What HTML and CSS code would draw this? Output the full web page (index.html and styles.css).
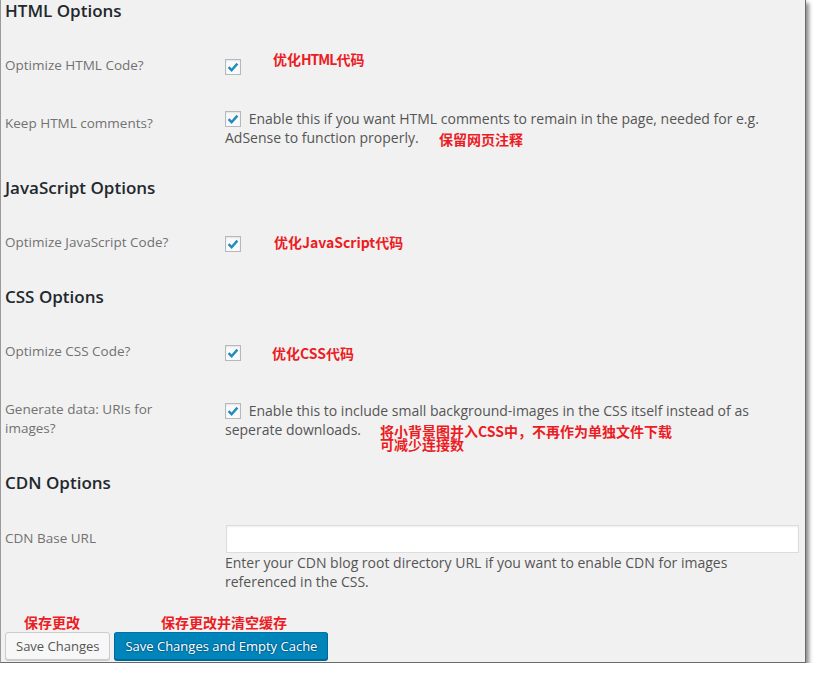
FILE: index.html
```html
<!DOCTYPE html>
<html lang="en">
<head>
    <meta charset="UTF-8">
    <meta name="viewport" content="width=device-width, initial-scale=1.0">
    <title>Autoptimize Settings</title>
    <link rel="stylesheet" href="styles.css">
</head>
<body>
    <div class="frame">
        <h3 class="section-title first">HTML Options</h3>
        <div class="form-table">
            <div class="row">
                <div class="label">Optimize HTML Code?</div>
                <div class="field">
                    <span class="check solo"><svg viewBox="0 0 16 16" width="16" height="16"><path d="M3.6 8.2 L6.6 11.2 L12.4 4.6" /></svg></span>
                </div>
            </div>
            <div class="row">
                <div class="label">Keep HTML comments?</div>
                <div class="field">
                    <span class="check"><svg viewBox="0 0 16 16" width="16" height="16"><path d="M3.6 8.2 L6.6 11.2 L12.4 4.6" /></svg></span>
                    Enable this if you want HTML comments to remain in the page, needed for e.g. AdSense to function properly.
                </div>
            </div>
        </div>

        <h3 class="section-title">JavaScript Options</h3>
        <div class="form-table">
            <div class="row">
                <div class="label">Optimize JavaScript Code?</div>
                <div class="field">
                    <span class="check solo"><svg viewBox="0 0 16 16" width="16" height="16"><path d="M3.6 8.2 L6.6 11.2 L12.4 4.6" /></svg></span>
                </div>
            </div>
        </div>

        <h3 class="section-title">CSS Options</h3>
        <div class="form-table">
            <div class="row">
                <div class="label">Optimize CSS Code?</div>
                <div class="field">
                    <span class="check solo"><svg viewBox="0 0 16 16" width="16" height="16"><path d="M3.6 8.2 L6.6 11.2 L12.4 4.6" /></svg></span>
                </div>
            </div>
            <div class="row">
                <div class="label tall">Generate data: URIs for images?</div>
                <div class="field low">
                    <span class="check"><svg viewBox="0 0 16 16" width="16" height="16"><path d="M3.6 8.2 L6.6 11.2 L12.4 4.6" /></svg></span>
                    Enable this to include small background-images in the CSS itself instead of as seperate downloads.
                </div>
            </div>
        </div>

        <h3 class="section-title">CDN Options</h3>
        <div class="form-table">
            <div class="row cdn">
                <div class="label">CDN Base URL</div>
                <div class="field">
                    <input type="text" class="text-input">
                    <div class="description">Enter your CDN blog root directory URL if you want to enable CDN for images referenced in the CSS.</div>
                </div>
            </div>
        </div>

        <div class="submit">
            <button class="button">Save Changes</button>
            <button class="button button-primary">Save Changes and Empty Cache</button>
        </div>

        <span class="note note-html">优化<span class="latin">HTML</span>代码</span>
        <span class="note note-comments">保留网页注释</span>
        <span class="note note-js">优化JavaScript代码</span>
        <span class="note note-css">优化CSS代码</span>
        <span class="note note-datauri">将小背景图并入CSS中，不再作为单独文件下载<br>可减少连接数</span>
        <span class="note note-save">保存更改</span>
        <span class="note note-empty">保存更改并清空缓存</span>
    </div>
</body>
</html>
```

FILE: styles.css
```css
body{
    margin: 0;
    background-color: #fff;
    font-family: "Open Sans", "Noto Sans", sans-serif;
}
.frame{
    position: relative;
    box-sizing: border-box;
    width: 806px;
    padding: 1px 0 2px 4px;
    background-color: #f1f1f1;
    border-left: 1px solid #9a9a9a;
    border-right: 1px solid #6b6b6b;
    border-bottom: 1px solid #6b6b6b;
    box-shadow: 3px 3px 4px rgba(0, 0, 0, 0.45);
    color: #555;
}
.section-title{
    margin: 16px 0;
    font-size: 17px;
    font-weight: 600;
    line-height: 19px;
    color: #23282d;
}
.section-title.first{
    margin-top: 0;
}
.row{
    display: grid;
    grid-template-columns: 220px 1fr;
}
.label{
    padding: 20px 30px 20px 0;
    font-size: 13.5px;
    line-height: 18px;
    color: #727272;
}
.label.tall{
    padding-bottom: 19px;
    line-height: 19px;
}
.cdn .label{
    padding-top: 21px;
}
.field{
    padding: 15px 7px 15px 0;
    font-size: 14px;
    line-height: 19px;
    color: #555;
}
.field.low{
    padding-top: 21px;
}
.cdn .field{
    padding-top: 17px;
}
.check{
    display: inline-block;
    box-sizing: border-box;
    width: 16px;
    height: 16px;
    margin: 0 4px 0 0;
    vertical-align: -3px;
    background-color: #fbfbfb;
    border: 1px solid #b4b9be;
    box-shadow: inset 0 1px 2px rgba(0, 0, 0, 0.1);
}
.check svg{
    display: block;
    margin: -1px;
}
.check path{
    fill: none;
    stroke: #1e8cbe;
    stroke-width: 2.4;
}
.check.solo{
    display: block;
    margin-top: 8px;
}
.text-input{
    display: block;
    box-sizing: border-box;
    width: 573px;
    height: 28px;
    margin: 0 0 0 1px;
    padding: 3px 5px;
    background-color: #fff;
    border: 1px solid #ddd;
    box-shadow: inset 0 1px 2px rgba(0, 0, 0, 0.07);
    font-family: "Open Sans", sans-serif;
    font-size: 14px;
}
.submit{
    display: flex;
    gap: 4px;
    margin-top: 26px;
}
.button{
    height: 28px;
    padding: 0 10px 1px;
    font-family: "Open Sans", sans-serif;
    font-size: 13px;
    line-height: 26px;
    color: #555;
    background-color: #f7f7f7;
    border: 1px solid #ccc;
    border-radius: 3px;
    box-shadow: 0 1px 0 #ccc;
    cursor: pointer;
}
.button-primary{
    color: #fff;
    background-color: #0085ba;
    border-color: #0073aa #006799 #006799;
    box-shadow: 0 1px 0 #006799;
    text-shadow: 0 -1px 1px #006799, 1px 0 1px #006799, 0 1px 1px #006799, -1px 0 1px #006799;
}
.note{
    position: absolute;
    font-family: "Noto Sans CJK SC", sans-serif;
    font-size: 14px;
    font-weight: 700;
    line-height: 14px;
    color: #ec1c24;
    white-space: nowrap;
}
.note .latin{
    letter-spacing: -1px;
}
.note-html{ left: 272px; top: 52px; }
.note-comments{ left: 438px; top: 132px; }
.note-js{ left: 273px; top: 235px; }
.note-css{ left: 271px; top: 346px; }
.note-datauri{ left: 379px; top: 425px; line-height: 13px; }
.note-save{ left: 23px; top: 615px; }
.note-empty{ left: 160px; top: 615px; }
```
